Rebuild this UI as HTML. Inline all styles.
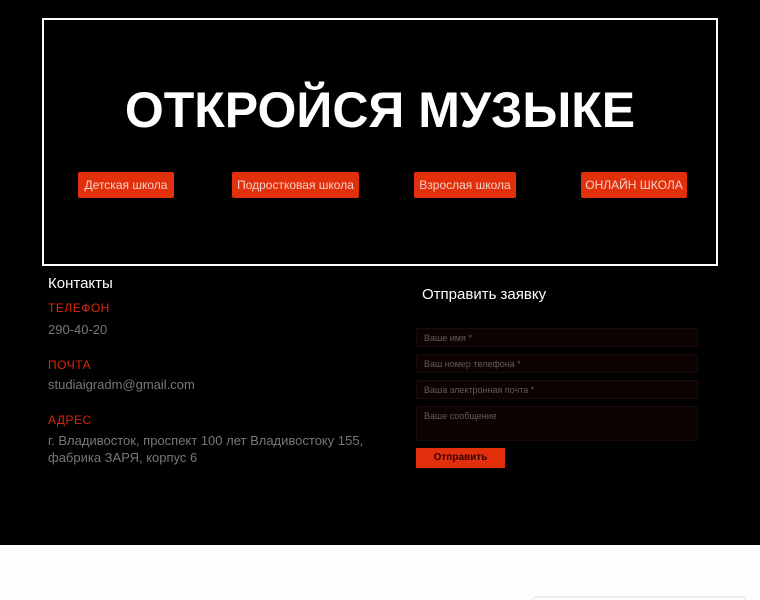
<!DOCTYPE html>
<html><head><meta charset="utf-8"><style>
*{margin:0;padding:0;box-sizing:border-box}
html{background:#fdfdfd}
body{width:760px;height:600px;overflow:hidden;background:#000;font-family:"Liberation Sans","DejaVu Sans",sans-serif;position:relative}
.hero{position:absolute;left:42px;top:18px;width:676px;height:248px;border:2px solid #fff}
h1{position:absolute;left:0;right:0;top:80px;text-align:center;color:#fff;font-size:50px;font-weight:bold;line-height:60px}
.btn{position:absolute;top:172px;height:26px;background:#e3300c;color:#f6d0c4;font-size:12px;line-height:26px;text-align:center;border-radius:2px}
.abs{position:absolute}
.lbl{color:#d8270a;font-size:12px;letter-spacing:.5px}
.val{color:#777;font-size:13px}
.inp{position:absolute;left:416px;width:282px;background:#0d0202;border:1px solid #1a0b08;color:#6a5a57;font-size:9px;padding-left:7px;border-radius:2px}
</style></head><body>
<div class="hero"></div>
<h1>ОТКРОЙСЯ МУЗЫКЕ</h1>
<div class="btn" style="left:78px;width:96px">Детская школа</div>
<div class="btn" style="left:232px;width:127px">Подростковая школа</div>
<div class="btn" style="left:414px;width:102px">Взрослая школа</div>
<div class="btn" style="left:581px;width:106px">ОНЛАЙН ШКОЛА</div>

<div class="abs" style="left:48px;top:275px;color:#fff;font-size:15px">Контакты</div>
<div class="abs lbl" style="left:48px;top:301px">ТЕЛЕФОН</div>
<div class="abs val" style="left:48px;top:322px">290-40-20</div>
<div class="abs lbl" style="left:48px;top:358px">ПОЧТА</div>
<div class="abs val" style="left:48px;top:377px">studiaigradm@gmail.com</div>
<div class="abs lbl" style="left:48px;top:413px">АДРЕС</div>
<div class="abs val" style="left:48px;top:432px;line-height:17px">г. Владивосток, проспект 100 лет Владивостоку 155,<br>фабрика ЗАРЯ, корпус 6</div>

<div class="abs" style="left:422px;top:286px;color:#fff;font-size:15px">Отправить заявку</div>
<div class="inp" style="top:328px;height:19px;line-height:18px">Ваше имя *</div>
<div class="inp" style="top:354px;height:19px;line-height:18px">Ваш номер телефона *</div>
<div class="inp" style="top:380px;height:19px;line-height:18px">Ваша электронная почта *</div>
<div class="inp" style="top:406px;height:35px;line-height:18px">Ваше сообщение</div>
<div class="abs" style="left:416px;top:448px;width:89px;height:20px;background:#e3300c;color:#300;font-size:10px;font-weight:bold;text-align:center;line-height:20px">Отправить</div>

<div class="abs" style="left:0;top:545px;width:760px;height:55px;background:#fdfdfd"></div>
<div class="abs" style="left:532px;top:596px;width:214px;height:4px;border-top:2px solid #eee;border-left:2px solid #eee;border-right:2px solid #eee;border-radius:6px 6px 0 0"></div>
</body></html>
